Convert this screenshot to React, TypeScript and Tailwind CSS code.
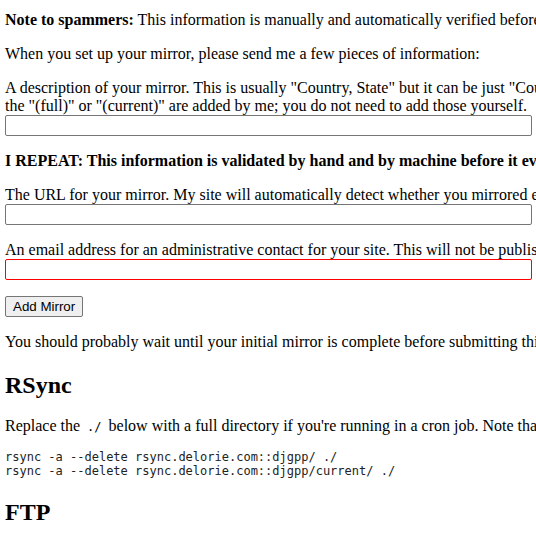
const serif = "font-['Liberation_Serif','Times_New_Roman',serif]";
const mono = "font-['DejaVu_Sans_Mono','Liberation_Mono',monospace]";

const Field = ({ bad }: { bad?: boolean }) => (
  <div
    className={
      bad
        ? "w-[527px] h-[21px] rounded-[2px] border border-[#ff0000] bg-white"
        : "w-[527px] h-[21px] rounded-[2px] border border-[#767676] bg-white"
    }
  >
    <input type="text" className="block h-full w-full bg-transparent px-[2px] outline-none" />
  </div>
);

export default function App() {
  return (
    <div className={`w-[536px] h-[536px] overflow-hidden bg-white text-black ${serif}`}>
      <div className="w-[1100px] pl-[5px] pt-[11px] text-[16px] leading-[18px]">
        <p className="mb-4">
          <b>Note to spammers:</b> This information is manually and automatically verified before it is
          used, and bogus submissions are simply discarded.
        </p>
        <p className="mb-4">When you set up your mirror, please send me a few pieces of information:</p>

        <div className="mb-4">
          <p>
            A description of your mirror. This is usually "Country, State" but it can be just "Country" or
            "Country, City" as appropriate;
            <br />
            the "(full)" or "(current)" are added by me; you do not need to add those yourself.
          </p>
          <Field />
        </div>

        <p className="mb-4 font-bold">
          I REPEAT: This information is validated by hand and by machine before it ever gets used.
        </p>

        <div className="mb-4">
          <p>
            The URL for your mirror. My site will automatically detect whether you mirrored everything or
            just the current release.
          </p>
          <Field />
        </div>

        <div className="mb-4">
          <p>
            An email address for an administrative contact for your site. This will not be published,
            it is only so I can contact you.
          </p>
          <Field bad />
        </div>

        <button className="mb-4 block h-[21px] rounded-[2px] border border-[#767676] bg-[#efefef] px-[7px] font-['Liberation_Sans',Arial,sans-serif] text-[13.33px] leading-[17px] text-black">
          Add Mirror
        </button>

        <p>
          You should probably wait until your initial mirror is complete before submitting this form, so
          that people don't get incomplete files.
        </p>

        <h2 className="mt-[20px] mb-[18px] text-[24px] font-bold leading-[28px]">RSync</h2>

        <p>
          Replace the <code className={`${mono} mx-[3px] text-[12px]`}>./</code> below with a full directory
          if you're running in a cron job. Note that the current directory is used otherwise.
        </p>

        <pre className={`${mono} mt-[14px] mb-[13px] text-[12px] leading-[14px] text-[#222]`}>
          {"rsync -a --delete rsync.delorie.com::djgpp/ ./\nrsync -a --delete rsync.delorie.com::djgpp/current/ ./"}
        </pre>

        <h2 className="mt-[20px] text-[24px] font-bold leading-[28px]">FTP</h2>
      </div>
    </div>
  );
}
